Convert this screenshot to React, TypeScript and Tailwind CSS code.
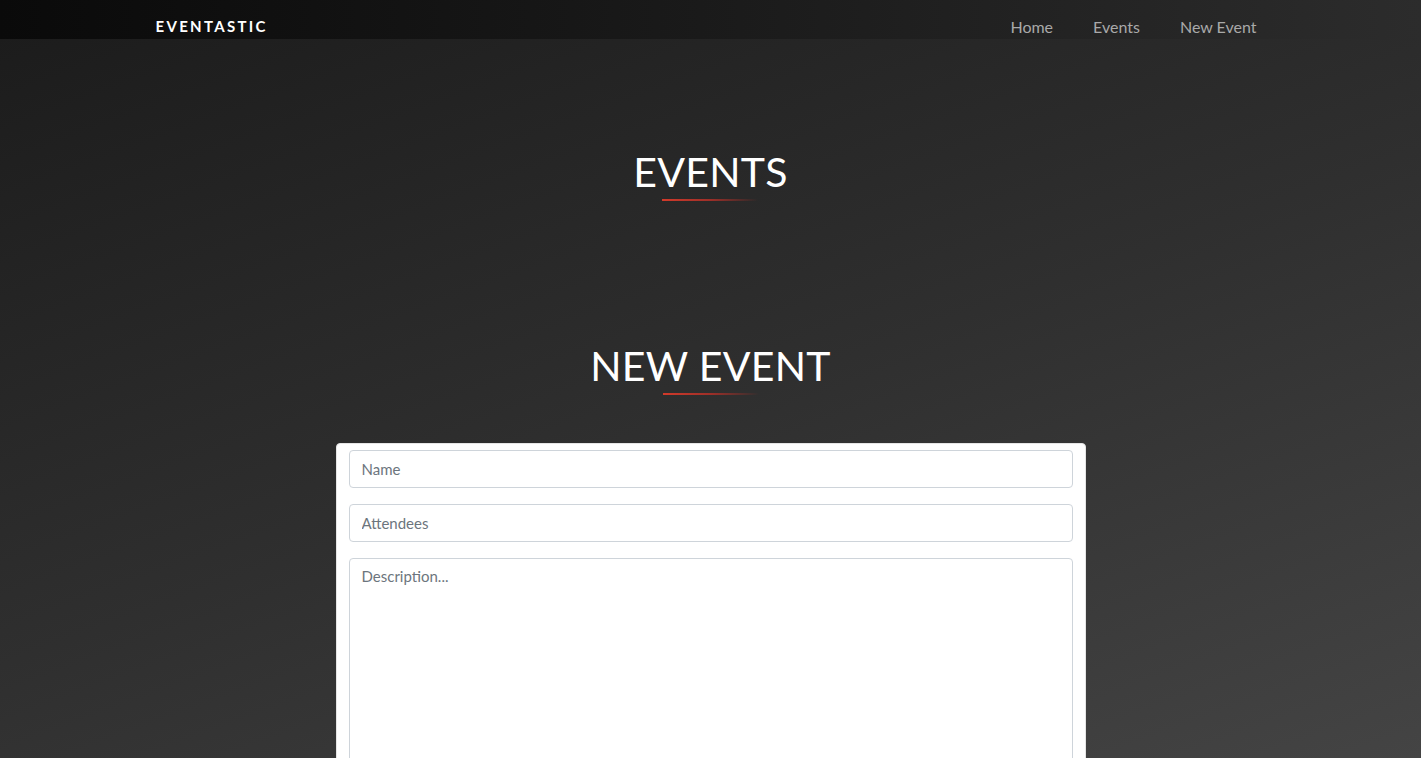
import { useState } from "react";

function Heading({ title }: { title: string }) {
  return (
    <div className="flex flex-col items-center">
      <h1 className="text-[41px] leading-[48px] text-white font-normal tracking-[0.3px]">{title}</h1>
      {/* red underline fading out */}
      <div className="mt-[3px] h-[2px] w-[96px] bg-gradient-to-r from-[#d23a2a] via-[#9e2f28] to-transparent" />
    </div>
  );
}

export default function App() {
  const [form, setForm] = useState({ name: "", attendees: "", description: "" });

  return (
    <div
      className="min-h-screen w-full bg-[linear-gradient(160deg,#1b1b1b_0%,#2f2f2f_50%,#464646_100%)] font-['Lato','Open_Sans',sans-serif]"
    >
      {/* navbar */}
      <nav className="h-[39px] bg-gradient-to-r from-[#0a0a0a] to-[#2c2c2c]">
        <div className="mx-auto flex h-full w-[1110px] items-center justify-between pt-[14px]">
          <a className="text-[15px] font-bold tracking-[2.3px] text-white">EVENTASTIC</a>
          <ul className="flex gap-10 pr-[9px] text-[16px] text-[#a9a9a9]">
            <li>Home</li>
            <li>Events</li>
            <li>New Event</li>
          </ul>
        </div>
      </nav>

      <main className="flex flex-col items-center">
        <section className="pt-[109px]">
          <Heading title="EVENTS" />
        </section>

        <section className="mt-[141px] flex w-full flex-col items-center">
          <Heading title="NEW EVENT" />

          <form className="mt-[48px] flex w-[750px] flex-col gap-4 rounded border border-[#e5e5e5] bg-white px-3 pt-[6px] pb-4">
            <input
              value={form.name}
              onChange={(e) => setForm({ ...form, name: e.target.value })}
              placeholder="Name"
              className="h-[38px] rounded border border-[#ced4da] px-3 text-[15px] text-[#495057] placeholder:text-[#6c757d] outline-none"
            />
            <input
              value={form.attendees}
              onChange={(e) => setForm({ ...form, attendees: e.target.value })}
              placeholder="Attendees"
              className="h-[38px] rounded border border-[#ced4da] px-3 text-[15px] text-[#495057] placeholder:text-[#6c757d] outline-none"
            />
            <textarea
              value={form.description}
              onChange={(e) => setForm({ ...form, description: e.target.value })}
              placeholder="Description..."
              className="h-[240px] resize-none rounded border border-[#ced4da] px-3 py-[6px] text-[15px] text-[#495057] placeholder:text-[#6c757d] outline-none"
            />
          </form>
        </section>
      </main>
    </div>
  );
}
